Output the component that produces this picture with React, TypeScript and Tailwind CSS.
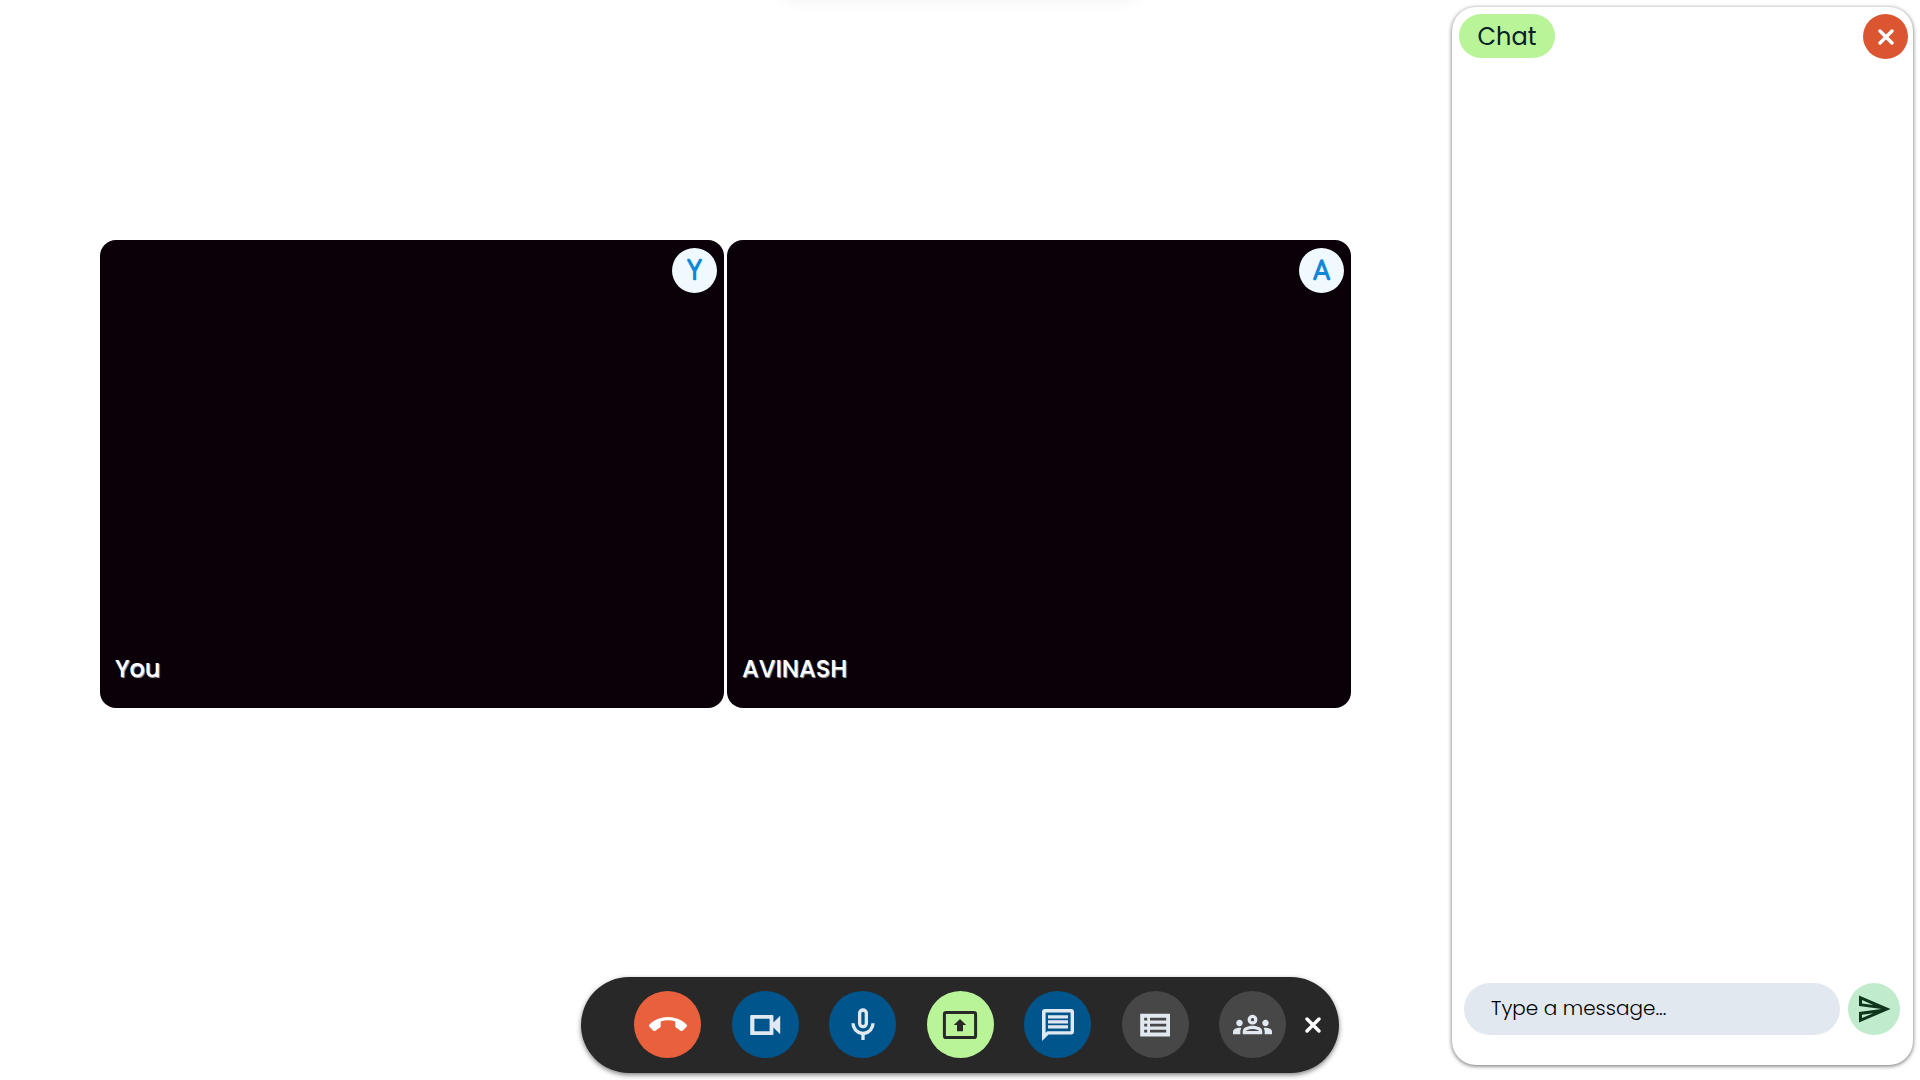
import type { ReactNode } from 'react';
import { MdCallEnd, MdOutlineGroups, MdOutlineSend } from 'react-icons/md';

function CameraIcon() {
  return (
    <svg viewBox="0 0 40 40" className="size-10" fill="currentColor" fillRule="evenodd" aria-hidden="true">
      <path d="M6.2 10H27.4Q28.4 10 28.4 11V17.4L35.2 10.8V29.2L28.4 22.6V29Q28.4 30 27.4 30H6.2Q5.2 30 5.2 29V11Q5.2 10 6.2 10zM9.4 13.8V26.2H24.6V13.8z" />
    </svg>
  );
}

function MicIcon() {
  return (
    <svg viewBox="0 -960 960 960" className="size-10" fill="currentColor" aria-hidden="true">
      <path d="M480-400q-50 0-85-35t-35-85v-240q0-50 35-85t85-35q50 0 85 35t35 85v240q0 50-35 85t-85 35Zm-40 280v-123q-104-14-172-93t-68-184h80q0 83 58.5 141.5T480-320q83 0 141.5-58.5T680-520h80q0 105-68 184t-172 93v123h-80Zm40-360q17 0 28.5-11.5T520-520v-240q0-17-11.5-28.5T480-800q-17 0-28.5 11.5T440-760v240q0 17 11.5 28.5T480-480Z" />
    </svg>
  );
}

function PresentIcon() {
  return (
    <svg viewBox="0 0 40 40" className="size-10" aria-hidden="true">
      <rect x="4.4" y="7.4" width="31.2" height="25.2" rx="1.6" fill="none" stroke="currentColor" strokeWidth="3" />
      <path d="M20 14l6.2 6h-3.2v6.2h-6V20h-3.2z" fill="currentColor" />
    </svg>
  );
}

function MessageIcon() {
  return (
    <svg viewBox="0 0 40 40" className="size-10" fill="currentColor" fillRule="evenodd" aria-hidden="true">
      <path d="M7 4H33Q36 4 36 7V26.600Q36 29.600 33 29.600H10.600L4 36V7Q4 4 7 4zM7.600 7.400V27.800L9.400 26.200H32.600V7.400z" />
      <path d="M10 10.200H30V13.600H10zM10 15.200H30V18.600H10zM10 20.200H30V23.600H10z" />
    </svg>
  );
}

function ListIcon() {
  return (
    <svg viewBox="0 0 40 40" className="size-10" fill="currentColor" fillRule="evenodd" aria-hidden="true">
      <path d="M5.2 8.8H35V31.6H5.2zM9.2 12.8v2.8h3v-2.8zM15 12.8v2.8h16.2v-2.8zM9.2 18.8v2.8h3v-2.8zM15 18.8v2.8h16.2v-2.8zM9.2 24.8v2.8h3v-2.8zM15 24.8v2.8h16.2v-2.8z" />
    </svg>
  );
}

function CrossIcon() {
  return (
    <svg viewBox="0 0 16 16" className="size-4" fill="none" stroke="currentColor" strokeWidth="3.4" strokeLinecap="round" aria-hidden="true">
      <path d="M2 2l12 12M14 2L2 14" />
    </svg>
  );
}

const tones = {
  red: 'bg-[#e8613c] text-white',
  blue: 'bg-[#00568c] text-slate-200',
  green: 'bg-[#b9f598] text-[#282828]',
  gray: 'bg-[#474747] text-slate-200',
};

const controls: { label: string; tone: keyof typeof tones; icon: ReactNode }[] = [
  { label: 'Leave call', tone: 'red', icon: <MdCallEnd className="size-[38px]" /> },
  { label: 'Camera', tone: 'blue', icon: <CameraIcon /> },
  { label: 'Microphone', tone: 'blue', icon: <MicIcon /> },
  { label: 'Share screen', tone: 'green', icon: <PresentIcon /> },
  { label: 'Chat', tone: 'blue', icon: <MessageIcon /> },
  { label: 'Activity list', tone: 'gray', icon: <ListIcon /> },
  { label: 'Participants', tone: 'gray', icon: <MdOutlineGroups className="size-[39px]" /> },
];

function Avatar({ name }: { name: string }) {
  return (
    <svg viewBox="0 0 45 45" className="size-[45px] self-end" aria-hidden="true">
      <circle cx="22.5" cy="22.5" r="22.5" fill="#eff9ff" />
      <text
        x="22.5"
        y="31"
        textAnchor="middle"
        fill="#1287d6"
        stroke="#1287d6"
        strokeWidth="2.6"
        strokeLinejoin="round"
        className="text-[27px] font-extralight"
      >
        {name[0].toUpperCase()}
      </text>
    </svg>
  );
}

function VideoTile({ name }: { name: string }) {
  return (
    <article className="flex aspect-[4/3] flex-1 flex-col justify-between rounded-2xl bg-[#0a0008] pt-2 pr-[7px] pb-[23px] pl-[15px]">
      <Avatar name={name} />
      <h2 className="text-2xl font-medium text-white [text-shadow:1px_1px_1px_rgba(255,255,255,0.7)]">{name}</h2>
    </article>
  );
}

export default function App() {
  return (
    <div className="relative flex min-h-screen overflow-hidden bg-white font-['Poppins','Inter',sans-serif]">
      <div className="absolute -top-11 left-1/2 h-9 w-[360px] -translate-x-1/2 rounded-full opacity-60 shadow-lg" />

      <main className="flex flex-1 items-center justify-center pr-[101px] pb-[132px] pl-[100px]">
        <div className="flex flex-1 gap-[3px]">
          <VideoTile name="You" />
          <VideoTile name="AVINASH" />
        </div>
      </main>

      <aside className="mt-[7px] mr-[7px] mb-[15px] flex w-[461px] flex-col rounded-3xl bg-white px-[7px] pt-[7px] pb-[30px] shadow-[0_1px_4px_rgba(0,0,0,0.6)]">
        <header className="flex items-start justify-between">
          <h1 className="flex h-11 w-24 items-center justify-center rounded-full bg-[#b9f598] pt-0.5 text-2xl text-[#042028]">Chat</h1>
          <button type="button" aria-label="Close chat" className="-mr-0.5 flex size-[45px] items-center justify-center rounded-full bg-[#db5530] text-white">
            <CrossIcon />
          </button>
        </header>
        <form className="mt-auto flex gap-2 pr-1.5 pl-[5px]" onSubmit={(e) => e.preventDefault()}>
          <input
            type="text"
            aria-label="Message"
            placeholder="Type a message..."
            className="h-[52px] min-w-0 flex-1 rounded-full bg-slate-200 px-[27px] pb-0.5 text-xl font-light text-black outline-none placeholder:text-black"
          />
          <button type="submit" aria-label="Send" className="flex size-[52px] items-center justify-center rounded-full bg-[#c1ebcd] text-[#0f351d]">
            <MdOutlineSend className="size-9" />
          </button>
        </form>
      </aside>

      <nav
        aria-label="Call controls"
        className="absolute bottom-[7px] left-1/2 flex h-24 w-[758px] -translate-x-1/2 items-center rounded-full bg-[#282828] pr-[18px] pb-px pl-[53px] shadow-[0_2px_5px_rgba(0,0,0,0.5)]"
      >
        <div className="flex flex-1 justify-between">
          {controls.map(({ label, tone, icon }) => (
            <button key={label} type="button" aria-label={label} className={`flex size-[67px] items-center justify-center rounded-full ${tones[tone]}`}>
              {icon}
            </button>
          ))}
        </div>
        <button type="button" aria-label="Hide controls" className="ml-[19px] flex size-4 items-center justify-center text-white">
          <CrossIcon />
        </button>
      </nav>
    </div>
  );
}
